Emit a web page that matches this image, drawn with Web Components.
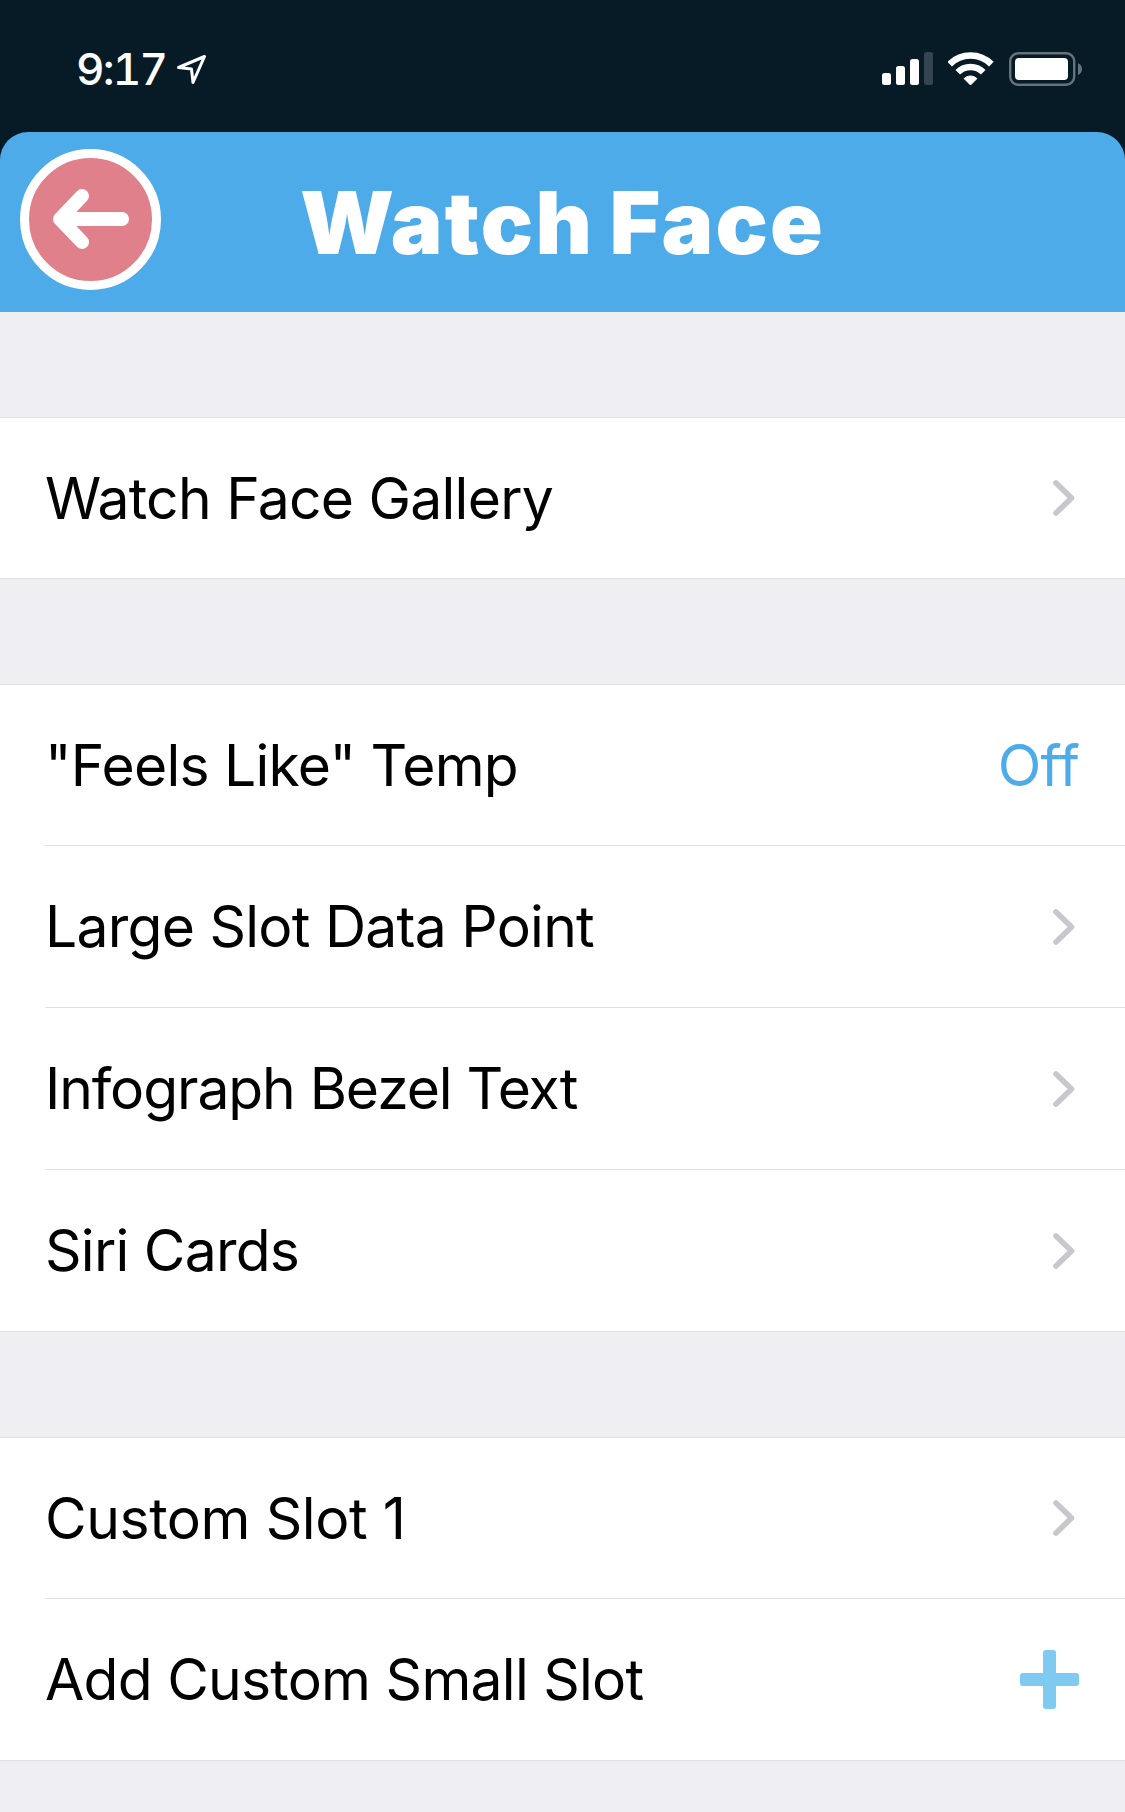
<!DOCTYPE html>
<html>
<head>
<meta charset="utf-8">
<title>Watch Face</title>
<style>
  html, body { margin: 0; padding: 0; }
  body { background: #eeeef3; font-family: Inter, "Liberation Sans", sans-serif; color: #000; }
  settings-group { margin-top: 105px; }
</style>
</head>
<body>
<status-bar time="9:17"></status-bar>
<app-header>Watch Face</app-header>

<settings-group>
  <settings-row>Watch Face Gallery<row-chevron slot="trailing"></row-chevron></settings-row>
</settings-group>

<settings-group>
  <settings-row>"Feels Like" Temp<span slot="trailing" style="color:#4dabe9">Off</span></settings-row>
  <settings-row>Large Slot Data Point<row-chevron slot="trailing"></row-chevron></settings-row>
  <settings-row style="--row-track:-1.1px">Infograph Bezel Text<row-chevron slot="trailing"></row-chevron></settings-row>
  <settings-row>Siri Cards<row-chevron slot="trailing"></row-chevron></settings-row>
</settings-group>

<settings-group>
  <settings-row style="--row-track:-0.42px">Custom Slot 1<row-chevron slot="trailing"></row-chevron></settings-row>
  <settings-row>Add Custom Small Slot<row-plus slot="trailing"></row-plus></settings-row>
</settings-group>

<script>
class StatusBar extends HTMLElement {
  constructor() {
    super();
    this.attachShadow({ mode: 'open' });
    this.shadowRoot.innerHTML = `
      <style>
      :host { display: flex; height: 132px; background: #071b27; color: #fff; align-items: flex-start; justify-content: space-between; padding: 52px 42px 0 76px; box-sizing: border-box; }
      .left { display: flex; align-items: center; gap: 10px; }
      .time { font: 500 44px/34px Inter, sans-serif; font-variant-numeric: tabular-nums; letter-spacing: -1.8px; }
      .right { display: flex; align-items: flex-start; }
      .wifi { margin: 0 15px 0 14px; }
      svg { display: block; }
      </style>
      <div class="left">
        <span class="time">${this.getAttribute('time')}</span>
        <svg width="31" height="31" viewBox="0 0 31 31"><path d="M2.5 13.5 L28.5 2.5 L17 28.5 L15.5 15 Z" fill="none" stroke="#fff" stroke-width="3" stroke-linejoin="round"/></svg>
      </div>
      <div class="right">
        <svg width="52" height="34" viewBox="0 0 52 34">
          <rect x="0" y="21" width="9" height="12" rx="2.5" fill="#fff"/>
          <rect x="14" y="14" width="9" height="19" rx="2.5" fill="#fff"/>
          <rect x="28" y="7" width="9" height="26" rx="2.5" fill="#fff"/>
          <rect x="42" y="0" width="9" height="33" rx="2.5" fill="#35454f"/>
        </svg>
        <svg class="wifi" width="46" height="34" viewBox="0 0 46 34">
          <path d="M1.64 12.14 A29.5 29.5 0 0 1 43.36 12.14" fill="none" stroke="#fff" stroke-width="6.5"/>
          <path d="M9.77 20.27 A18 18 0 0 1 35.23 20.27" fill="none" stroke="#fff" stroke-width="6.5"/>
          <path d="M22.5 33 L16.1 26.6 A9 9 0 0 1 28.9 26.6 Z" fill="#fff" stroke="#fff" stroke-linejoin="round"/>
        </svg>
        <svg width="74" height="35" viewBox="0 0 74 35">
          <rect x="1.2" y="1.2" width="64" height="31.6" rx="8" fill="none" stroke="#65737c" stroke-width="2.4"/>
          <rect x="6" y="6" width="53" height="22" rx="4" fill="#fff"/>
          <path d="M69 11 Q73 13 73 17 Q73 21 69 23 Z" fill="#65737c"/>
        </svg>
      </div>
    `;
  }
}

class AppHeader extends HTMLElement {
  constructor() {
    super();
    this.attachShadow({ mode: 'open' });
    this.shadowRoot.innerHTML = `
      <style>
      :host { display: block; background: #071b27; }
      .bar { display: grid; grid-template-columns: 1fr auto 1fr; align-items: center; height: 180px; background: #4dabe9; border-radius: 28px 28px 0 0; }
      .title { font: 900 87px/1 Inter, sans-serif; color: #fff; letter-spacing: 2.1px; word-spacing: -4px; white-space: nowrap; }
      svg { display: block; margin: 0 0 6px 20px; }
      </style>
      <div class="bar">
        <svg width="141" height="141" viewBox="0 0 141 141">
          <circle cx="70.5" cy="70.5" r="66" fill="#e0808b" stroke="#fff" stroke-width="9"/>
          <path d="M62 47 L40 70 L62 93 M40 70 H102" fill="none" stroke="#fff" stroke-width="14" stroke-linecap="round" stroke-linejoin="round"/>
        </svg>
        <div class="title"><slot></slot></div>
        <div></div>
      </div>
    `;
  }
}

class SettingsGroup extends HTMLElement {
  constructor() {
    super();
    this.attachShadow({ mode: 'open' });
    this.shadowRoot.innerHTML = `
      <style>
      :host { display: block; background: #fff; border-top: 1px solid #e0e0e3; border-bottom: 1px solid #e0e0e3; }
      ::slotted(settings-row:first-child) { --row-h: 160px; }
      ::slotted(settings-row:not(:last-child)) { --row-sep: 1px; }
      </style>
      <slot></slot>
    `;
  }
}

class SettingsRow extends HTMLElement {
  constructor() {
    super();
    this.attachShadow({ mode: 'open' });
    this.shadowRoot.innerHTML = `
      <style>
      :host { display: block; padding-left: 45px; }
      .row { display: flex; align-items: center; justify-content: space-between; height: var(--row-h, 161px); padding-right: 46px; border-bottom: var(--row-sep, 0) solid #e0e0e3; font: 400 57px/1 Inter, sans-serif; letter-spacing: var(--row-track, -0.75px); }
      </style>
      <div class="row">
        <span><slot></slot></span>
        <slot name="trailing"></slot>
      </div>
    `;
  }
}

class RowChevron extends HTMLElement {
  constructor() {
    super();
    this.attachShadow({ mode: 'open' });
    this.shadowRoot.innerHTML = `
      <style>:host { display: block; width: 22px; height: 36px; margin-right: 4px; } svg { display: block; }</style>
      <svg width="22" height="36" viewBox="0 0 22 36"><path d="M3 3 L18.5 18 L3 33" fill="none" stroke="#c7c7cc" stroke-width="5.6" stroke-linecap="round" stroke-linejoin="round"/></svg>
    `;
  }
}

class RowPlus extends HTMLElement {
  constructor() {
    super();
    this.attachShadow({ mode: 'open' });
    this.shadowRoot.innerHTML = `
      <style>:host { display: block; width: 59px; height: 59px; } svg { display: block; }</style>
      <svg width="59" height="59" viewBox="0 0 59 59">
        <rect x="23" y="0" width="13" height="59" rx="3" fill="#7fcaf1"/>
        <rect x="0" y="23" width="59" height="13" rx="3" fill="#7fcaf1"/>
      </svg>
    `;
  }
}

customElements.define('status-bar', StatusBar);
customElements.define('app-header', AppHeader);
customElements.define('settings-group', SettingsGroup);
customElements.define('settings-row', SettingsRow);
customElements.define('row-chevron', RowChevron);
customElements.define('row-plus', RowPlus);
</script>
</body>
</html>
